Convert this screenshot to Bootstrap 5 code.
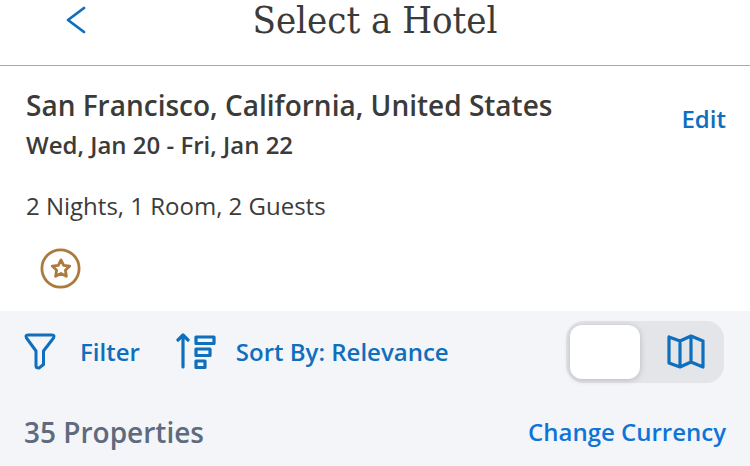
<!DOCTYPE html>
<html lang="en">
<head>
<meta charset="utf-8">
<meta name="viewport" content="width=device-width, initial-scale=1">
<title>Select a Hotel</title>
<link href="https://cdn.jsdelivr.net/npm/bootstrap@5.3.0/dist/css/bootstrap.min.css" rel="stylesheet">
<style>
body{font-family:"Open Sans","Noto Sans",sans-serif;color:#3b3b3a;font-size:24px;line-height:32px;background:#f3f5f9}
svg{display:block;fill:none;stroke:currentColor;stroke-linecap:round;stroke-linejoin:round}
.blue{color:#0f6fbd}
.topbar{height:66px;border-bottom:1px solid #aaa;padding:0 26px 26px;display:grid;grid-template-columns:100px 1fr 100px}
.topbar h1{font-family:"DejaVu Serif Condensed","DejaVu Serif",serif;font-size:38px;line-height:40px}
.back{padding-left:38px}
.stay{padding:21px 24px 21px 26px}
.stay h2{font-size:28px;line-height:36px}
.stay .dates{margin-top:6px}
.stay .guests{margin-top:29px}
.award{color:#ad7a3e;margin:26px 0 0 14px}
.edit{padding-top:16px}
.tools{padding:10px 26px 0 24px}
.tools .btn{font-size:24px;line-height:32px}
.tools .filter{gap:24px}
.tools .sorter{margin-left:36px;gap:20px}
.switch-track{background:#e4e5e9;border-radius:18px;padding:4px}
.switch-track .seg{width:80px;height:54px}
.switch-track .seg-on{width:70px;background:#fff;border-radius:12px;box-shadow:0 1px 6px #0003}
.seg-map{padding-left:12px}
.results{padding:33px 24px 17px}
.results h2{font-size:28px;line-height:32px;color:#5e6a7d}
.bright{color:#0e74d8}
</style>
<script defer src="https://cdn.jsdelivr.net/npm/bootstrap@5.3.0/dist/js/bootstrap.bundle.min.js"></script>
</head>
<body>
<header class="topbar bg-white">
  <button type="button" class="back btn border-0 p-0 blue d-flex align-items-center" aria-label="Back"><svg class="mx-auto" width="24" height="32" viewBox="0 0 24 32" stroke-width="2.8"><path d="M20 4 4 16l16 12"/></svg></button>
  <h1 class="m-0 text-center fw-normal text-nowrap">Select a Hotel</h1>
</header>
<main>
  <section class="stay bg-white">
    <div class="d-flex justify-content-between align-items-start">
      <div>
        <h2 class="m-0 fw-semibold">San Francisco, California, United States</h2>
        <p class="dates mb-0 fw-semibold">Wed, Jan 20 - Fri, Jan 22</p>
      </div>
      <a href="#" class="edit blue fw-semibold text-decoration-none">Edit</a>
    </div>
    <p class="guests mb-0">2 Nights, 1 Room, 2 Guests</p>
    <svg class="award" width="42" height="42" viewBox="0 0 42 42" stroke-width="2.8" role="img" aria-label="Award"><circle cx="20.5" cy="20.5" r="18.6"/><path d="m21 12 2.700 5.300 6 .8-4.300 4.200 1 6-5.400-2.800-5.400 2.800 1-6-4.300-4.200 6-.8Z"/></svg>
  </section>
  <section>
    <div class="tools d-flex align-items-center">
      <button type="button" class="filter btn border-0 p-0 blue d-flex align-items-center fw-semibold"><svg width="32" height="38" viewBox="0 0 32 38" stroke-width="3"><path d="M4 2h24q3 0 1.500 3L19.500 18v13.500L15 35q-3 0-3-2V18L2.500 5Q1 2 4 2Z"/></svg><span>Filter</span></button>
      <button type="button" class="sorter btn border-0 p-0 blue d-flex align-items-center fw-semibold"><svg width="40" height="38" viewBox="0 0 40 38" stroke-width="3.2"><path d="M7 34V2M2 7l5-5 5 5"/><path d="M20 4h18v6.500H20ZM20 16h14v6.500H20ZM20 28h9v6.500h-9Z"/></svg><span>Sort By: Relevance</span></button>
      <div class="switch-track d-flex ms-auto" role="group" aria-label="View">
        <button type="button" class="seg seg-on btn border-0 p-0" aria-label="List view" aria-pressed="true"></button>
        <button type="button" class="seg btn border-0 py-0 pe-0 seg-map blue d-flex align-items-center justify-content-center" aria-label="Map view"><svg width="40" height="38" viewBox="0 0 40 38" stroke-width="3.2"><path d="M3 4v26l11 4 11-5 12 5V8L25 3 14 8ZM14 8v26M25 3v26"/></svg></button>
      </div>
    </div>
    <div class="results d-flex justify-content-between align-items-center">
      <h2 class="m-0 fw-semibold">35 Properties</h2>
      <a href="#" class="bright fw-semibold text-decoration-none">Change Currency</a>
    </div>
  </section>
</main>
</body>
</html>
